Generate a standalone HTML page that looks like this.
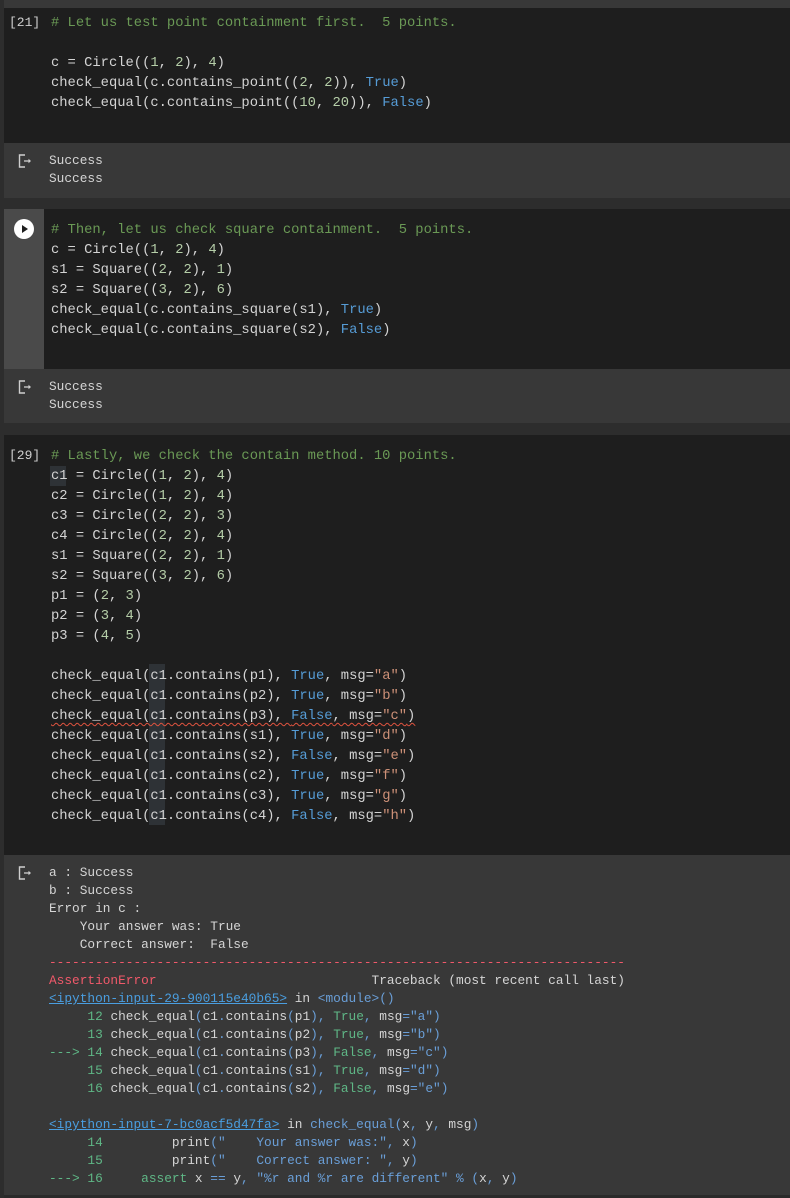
<!DOCTYPE html>
<html><head><meta charset="utf-8"><style>
*{margin:0;padding:0;box-sizing:border-box}
body{width:790px;height:1198px;background:#2d2d2d;position:relative;overflow:hidden;font-family:"Liberation Mono",monospace}
.blk{position:absolute;left:4px;right:0}
.code{background:#1e1e1e}
.out{background:#383838}
pre{position:absolute;font-family:"Liberation Mono",monospace;white-space:pre}
pre.cd{left:51px;font-size:13.8px;line-height:20px;color:#d4d4d4}
pre.op{left:49px;font-size:12.8px;line-height:18px;color:#d5d5d5}
.cm{color:#6a9955}.n{color:#b5cea8}.k{color:#569cd6}.s{color:#ce9178}
.g{color:#5fb786}.r{color:#f0596a}.l{color:#4a9ee0;text-decoration:underline}.b{color:#6a9fd8}
.lbl{position:absolute;left:9px;font-size:13px;color:#cfcfcf;font-family:"Liberation Mono",monospace}
.sq{text-decoration:underline wavy #e0533f;text-underline-offset:3px;text-decoration-thickness:1px}
.hl{position:absolute;width:16px;background:#2e3236}
.ico{position:absolute;left:18px;width:16px;height:14px}
</style></head><body>
<div class="blk out" style="top:0;height:8px"></div>

<div class="blk code" style="top:8px;height:135px"></div>
<div class="lbl" style="top:15px">[21]</div>
<pre class="cd" style="top:14px"><span class="cm"># Let us test point containment first.  5 points.</span>

c = Circle((<span class="n">1</span>, <span class="n">2</span>), <span class="n">4</span>)
check_equal(c.contains_point((<span class="n">2</span>, <span class="n">2</span>)), <span class="k">True</span>)
check_equal(c.contains_point((<span class="n">10</span>, <span class="n">20</span>)), <span class="k">False</span>)</pre>

<div class="blk out" style="top:143px;height:55px"></div>
<svg class="ico" style="top:154px" viewBox="0 0 16 14"><path d="M7 1H1.5V13H7" fill="none" stroke="#cfcfcf" stroke-width="1.4"/><path d="M6 7H11" stroke="#cfcfcf" stroke-width="1.3"/><path d="M10.5 4.8L13 7L10.5 9.2Z" fill="#cfcfcf"/></svg>
<pre class="op" style="top:152px">Success
Success</pre>

<div class="blk code" style="top:209px;height:160px"></div>
<div style="position:absolute;left:4px;top:209px;width:40px;height:160px;background:#4a4a4a"></div>
<svg style="position:absolute;left:14px;top:219px" width="20" height="20" viewBox="0 0 20 20"><circle cx="10" cy="10" r="10" fill="#fff"/><path d="M8 6L14 10L8 14Z" fill="#1e1e1e"/></svg>
<pre class="cd" style="top:221px"><span class="cm"># Then, let us check square containment.  5 points.</span>
c = Circle((<span class="n">1</span>, <span class="n">2</span>), <span class="n">4</span>)
s1 = Square((<span class="n">2</span>, <span class="n">2</span>), <span class="n">1</span>)
s2 = Square((<span class="n">3</span>, <span class="n">2</span>), <span class="n">6</span>)
check_equal(c.contains_square(s1), <span class="k">True</span>)
check_equal(c.contains_square(s2), <span class="k">False</span>)</pre>

<div class="blk out" style="top:369px;height:54px"></div>
<svg class="ico" style="top:380px" viewBox="0 0 16 14"><path d="M7 1H1.5V13H7" fill="none" stroke="#cfcfcf" stroke-width="1.4"/><path d="M6 7H11" stroke="#cfcfcf" stroke-width="1.3"/><path d="M10.5 4.8L13 7L10.5 9.2Z" fill="#cfcfcf"/></svg>
<pre class="op" style="top:378px">Success
Success</pre>

<div class="blk code" style="top:435px;height:420px"></div>
<div class="hl" style="left:50px;top:466px;height:20px"></div>
<div class="hl" style="left:149px;top:664px;height:161px"></div>
<div class="lbl" style="top:448px">[29]</div>
<pre class="cd" style="top:447px"><span class="cm"># Lastly, we check the contain method. 10 points.</span>
c1 = Circle((<span class="n">1</span>, <span class="n">2</span>), <span class="n">4</span>)
c2 = Circle((<span class="n">1</span>, <span class="n">2</span>), <span class="n">4</span>)
c3 = Circle((<span class="n">2</span>, <span class="n">2</span>), <span class="n">3</span>)
c4 = Circle((<span class="n">2</span>, <span class="n">2</span>), <span class="n">4</span>)
s1 = Square((<span class="n">2</span>, <span class="n">2</span>), <span class="n">1</span>)
s2 = Square((<span class="n">3</span>, <span class="n">2</span>), <span class="n">6</span>)
p1 = (<span class="n">2</span>, <span class="n">3</span>)
p2 = (<span class="n">3</span>, <span class="n">4</span>)
p3 = (<span class="n">4</span>, <span class="n">5</span>)

check_equal(c1.contains(p1), <span class="k">True</span>, msg=<span class="s">"a"</span>)
check_equal(c1.contains(p2), <span class="k">True</span>, msg=<span class="s">"b"</span>)
<span class="sq">check_equal(c1.contains(p3), <span class="k">False</span>, msg=<span class="s">"c"</span>)</span>
check_equal(c1.contains(s1), <span class="k">True</span>, msg=<span class="s">"d"</span>)
check_equal(c1.contains(s2), <span class="k">False</span>, msg=<span class="s">"e"</span>)
check_equal(c1.contains(c2), <span class="k">True</span>, msg=<span class="s">"f"</span>)
check_equal(c1.contains(c3), <span class="k">True</span>, msg=<span class="s">"g"</span>)
check_equal(c1.contains(c4), <span class="k">False</span>, msg=<span class="s">"h"</span>)</pre>

<div class="blk out" style="top:855px;height:340px"></div>
<div class="blk" style="top:1195px;height:3px;background:#2a2a2a"></div>
<svg class="ico" style="top:866px" viewBox="0 0 16 14"><path d="M7 1H1.5V13H7" fill="none" stroke="#cfcfcf" stroke-width="1.4"/><path d="M6 7H11" stroke="#cfcfcf" stroke-width="1.3"/><path d="M10.5 4.8L13 7L10.5 9.2Z" fill="#cfcfcf"/></svg>
<pre class="op" style="top:864px">a : Success
b : Success
Error in c :
    Your answer was: True
    Correct answer:  False
<span class="r">---------------------------------------------------------------------------</span>
<span class="r">AssertionError</span>                            Traceback (most recent call last)
<span class="l">&lt;ipython-input-29-900115e40b65&gt;</span> in <span class="b">&lt;module&gt;()</span>
     <span class="g">12</span> check_equal<span class="b">(</span>c1<span class="b">.</span>contains<span class="b">(</span>p1<span class="b">),</span> <span class="g">True</span><span class="b">,</span> msg<span class="b">="a")</span>
     <span class="g">13</span> check_equal<span class="b">(</span>c1<span class="b">.</span>contains<span class="b">(</span>p2<span class="b">),</span> <span class="g">True</span><span class="b">,</span> msg<span class="b">="b")</span>
<span class="g">---&gt; 14</span> check_equal<span class="b">(</span>c1<span class="b">.</span>contains<span class="b">(</span>p3<span class="b">),</span> <span class="g">False</span><span class="b">,</span> msg<span class="b">="c")</span>
     <span class="g">15</span> check_equal<span class="b">(</span>c1<span class="b">.</span>contains<span class="b">(</span>s1<span class="b">),</span> <span class="g">True</span><span class="b">,</span> msg<span class="b">="d")</span>
     <span class="g">16</span> check_equal<span class="b">(</span>c1<span class="b">.</span>contains<span class="b">(</span>s2<span class="b">),</span> <span class="g">False</span><span class="b">,</span> msg<span class="b">="e")</span>

<span class="l">&lt;ipython-input-7-bc0acf5d47fa&gt;</span> in <span class="b">check_equal(</span>x<span class="b">,</span> y<span class="b">,</span> msg<span class="b">)</span>
     <span class="g">14</span>         print<span class="b">("    Your answer was:",</span> x<span class="b">)</span>
     <span class="g">15</span>         print<span class="b">("    Correct answer: ",</span> y<span class="b">)</span>
<span class="g">---&gt; 16</span>     <span class="g">assert</span> x <span class="b">==</span> y<span class="b">, "%r and %r are different" % (</span>x<span class="b">,</span> y<span class="b">)</span></pre>
</body></html>
